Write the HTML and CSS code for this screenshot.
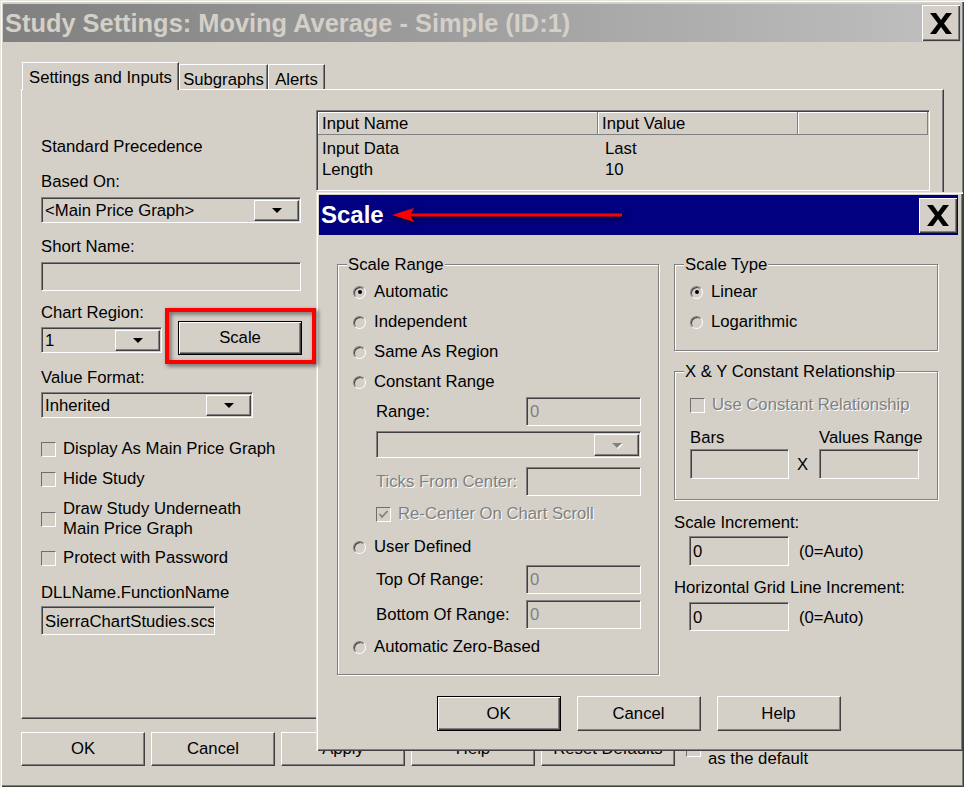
FILE: index.html
```html
<!DOCTYPE html>
<html>
<head>
<meta charset="utf-8">
<title>Study Settings</title>
<link rel="stylesheet" href="styles.css">
</head>
<body>
<div class="win">
  <div class="titlebar inactive">
    <span class="title">Study Settings: Moving Average - Simple (ID:1)</span>
    <span class="xbtn xbtn-main"><svg width="22" height="21" viewBox="0 0 22 21"><polygon points="0,0 6,0 11,7 16,0 22,0 14,10.5 22,21 16,21 11,14 6,21 0,21 8,10.5" fill="#000"/></svg></span>
  </div>
  <div class="win-body">
    <div class="tabs">
      <div class="tab active w157">Settings and Inputs</div>
      <div class="tab w89">Subgraphs</div>
      <div class="tab w57">Alerts</div>
    </div>
    <div class="panel">
      <div class="left-col">
        <div class="lbl">Standard Precedence</div>
        <div class="lbl mt15">Based On:</div>
        <div class="combo w260 mt6"><span class="combo-text">&lt;Main Price Graph&gt;</span><span class="ddbtn"><i class="tri"></i></span></div>
        <div class="lbl mt13">Short Name:</div>
        <div class="edit w260 mt6"></div>
        <div class="lbl mt11">Chart Region:</div>
        <div class="cr-row">
          <div class="combo w121 mt6"><span class="combo-text">1</span><span class="ddbtn"><i class="tri"></i></span></div>
          <div class="btn default scale-btn">Scale</div>
        </div>
        <div class="lbl mt12">Value Format:</div>
        <div class="combo w212 mt5"><span class="combo-text">Inherited</span><span class="ddbtn"><i class="tri"></i></span></div>
        <div class="chk mt20"><span class="cbox"></span><span>Display As Main Price Graph</span></div>
        <div class="chk mt10"><span class="cbox"></span><span>Hide Study</span></div>
        <div class="chk mt10"><span class="cbox"></span><span>Draw Study Underneath<br>Main Price Graph</span></div>
        <div class="chk mt9"><span class="cbox"></span><span>Protect with Password</span></div>
        <div class="lbl mt15">DLLName.FunctionName</div>
        <div class="edit w174 mt4">SierraChartStudies.scsf_SimpleMovAvg</div>
      </div>
      <div class="list">
        <div class="list-head">
          <div class="hcell c1">Input Name</div>
          <div class="hcell c2">Input Value</div>
          <div class="hcell c3"></div>
        </div>
        <div class="list-rows">
          <div class="lrow"><span class="c1">Input Data</span><span class="c2">Last</span></div>
          <div class="lrow"><span class="c1">Length</span><span class="c2">10</span></div>
        </div>
      </div>
    </div>
    <div class="bottom-buttons">
      <div class="btn">OK</div>
      <div class="btn">Cancel</div>
      <div class="btn">Apply</div>
      <div class="btn">Help</div>
      <div class="btn w134">Reset Defaults</div>
      <div class="chk save-default"><span class="cbox"></span><span>Use these settings<br>as the default</span></div>
    </div>
  </div>
</div>

<div class="dlg">
  <div class="titlebar active">
    <span class="title dlg-title">Scale</span>
    <span class="xbtn xbtn-dlg"><svg width="22" height="21" viewBox="0 0 22 21"><polygon points="0,0 6,0 11,7 16,0 22,0 14,10.5 22,21 16,21 11,14 6,21 0,21 8,10.5" fill="#000"/></svg></span>
  </div>
  <div class="dlg-body">
    <div class="dlg-cols">
      <div class="group g-range">
        <div class="gtitle"><span>Scale Range</span></div>
        <div class="opt mt2"><span class="radio on"></span>Automatic</div>
        <div class="opt"><span class="radio"></span>Independent</div>
        <div class="opt"><span class="radio"></span>Same As Region</div>
        <div class="opt"><span class="radio"></span>Constant Range</div>
        <div class="field"><span class="flabel">Range:</span><span class="edit w115 h29 dis-val">0</span></div>
        <div class="combo w265 h27 mt5 ind"><span class="combo-text"></span><span class="ddbtn"><i class="tri tri-dis"></i></span></div>
        <div class="field mt8"><span class="flabel dis-text">Ticks From Center:</span><span class="edit w115 h29"></span></div>
        <div class="opt ind mt2"><span class="cbox checked"><svg width="13" height="13" viewBox="0 0 13 13"><polyline points="2.5,6 5,9 10.5,3" fill="none" stroke="#808080" stroke-width="1.8"/></svg></span><span class="dis-text">Re-Center On Chart Scroll</span></div>
        <div class="opt mt3"><span class="radio"></span>User Defined</div>
        <div class="field mt3"><span class="flabel">Top Of Range:</span><span class="edit w115 h29 dis-val">0</span></div>
        <div class="field mt5"><span class="flabel">Bottom Of Range:</span><span class="edit w115 h29 dis-val">0</span></div>
        <div class="opt mt2"><span class="radio"></span>Automatic Zero-Based</div>
      </div>
      <div class="dlg-right">
        <div class="group g-type">
          <div class="gtitle"><span>Scale Type</span></div>
          <div class="opt mt2"><span class="radio on"></span>Linear</div>
          <div class="opt"><span class="radio"></span>Logarithmic</div>
        </div>
        <div class="group g-xy">
          <div class="gtitle"><span>X &amp; Y Constant Relationship</span></div>
          <div class="opt mt8"><span class="cbox"></span><span class="dis-text">Use Constant Relationship</span></div>
          <div class="xy-grid">
            <span class="lbl">Bars</span><span></span><span class="lbl nowrap">Values Range</span>
            <span class="edit h30"></span><span class="xmark">X</span><span class="edit h30"></span>
          </div>
        </div>
        <div class="lbl mt12">Scale Increment:</div>
        <div class="inc-row mt4"><span class="edit w100 h30">0</span><span class="auto">(0=Auto)</span></div>
        <div class="lbl mt11">Horizontal Grid Line Increment:</div>
        <div class="inc-row mt5"><span class="edit w100 h29">0</span><span class="auto">(0=Auto)</span></div>
      </div>
    </div>
    <div class="dlg-buttons">
      <div class="btn default h35">OK</div>
      <div class="btn h35">Cancel</div>
      <div class="btn h35">Help</div>
    </div>
  </div>
</div>

<div class="red-box"></div>
<svg class="red-arrow" width="240" height="24" viewBox="0 0 240 24">
  <line x1="18" y1="12" x2="232" y2="12" stroke="#f00" stroke-width="3"/>
  <polygon points="2,12 24,5 20,12 24,19" fill="#f00"/>
</svg>
</body>
</html>
```

FILE: styles.css
```css
* { box-sizing: border-box; }
html, body { margin: 0; padding: 0; }
body {
  width: 964px;
  height: 787px;
  overflow: hidden;
  position: relative;
  background: #d4d0c8;
  font-family: "Liberation Sans", Arial, sans-serif;
  font-size: 16.7px;
  line-height: 20px;
  color: #000;
}

/* ---------- outer window ---------- */
.win {
  width: 964px;
  height: 787px;
  padding: 4px 3px 3px 3px;
  background: #d4d0c8;
  box-shadow: inset 1px 1px #e6e4df, inset 2px 2px #fff, inset -1px -1px #404040, inset -2px -2px #808080;
}
.titlebar {
  display: flex;
  align-items: center;
  justify-content: space-between;
  height: 38px;
  padding: 0 1px 0 2px;
}
.titlebar.inactive { background: linear-gradient(to right, #808080, #c0c0c0); }
.title {
  font-weight: bold;
  font-size: 25.4px;
  line-height: 30px;
  color: #d4d0c8;
  white-space: nowrap;
}
.xbtn {
  width: 38px;
  height: 36px;
  display: flex;
  align-items: center;
  justify-content: center;
  background: #d4d0c8;
  box-shadow: inset 1px 1px #fff, inset -1px -1px #404040, inset -2px -2px #808080;
}
.win-body { padding: 20px 0 0 18px; }

.tabs {
  display: flex;
  align-items: flex-end;
  height: 27px;
  margin-left: 1px;
  position: relative;
  z-index: 1;
}
.tab {
  height: 25px;
  padding-top: 5px;
  text-align: center;
  white-space: nowrap;
  background: #d4d0c8;
  border-top: 1px solid #fff;
  border-left: 1px solid #fff;
  border-right: 1px solid #404040;
  box-shadow: inset -1px 0 #808080;
}
.tab.active {
  height: 28px;
  margin-bottom: -1px;
  padding-top: 5px;
}
.w157 { width: 157px; }
.w89 { width: 89px; }
.w57 { width: 57px; }

.panel {
  width: 923px;
  height: 630px;
  display: flex;
  align-items: flex-start;
  padding: 20px 12px 0 19px;
  border: 1px solid;
  border-color: #fff #404040 #404040 #fff;
  box-shadow: inset -1px -1px #808080;
}
.left-col {
  width: 275px;
  flex: none;
  padding-top: 26px;
}
.lbl { height: 20px; line-height: 22px; white-space: nowrap; }
.nowrap { white-space: nowrap; }

.mt2 { margin-top: 2px; }
.mt3 { margin-top: 3px; }
.mt4 { margin-top: 4px; }
.mt5 { margin-top: 5px; }
.mt6 { margin-top: 6px; }
.mt8 { margin-top: 8px; }
.mt9 { margin-top: 9px; }
.mt10 { margin-top: 10px; }
.mt11 { margin-top: 11px; }
.mt12 { margin-top: 12px; }
.mt13 { margin-top: 13px; }
.mt15 { margin-top: 15px; }
.mt20 { margin-top: 20px; }

/* combos & edits */
.combo {
  height: 26px;
  display: flex;
  align-items: stretch;
  padding: 2px 1px 1px 2px;
  border: 1px solid;
  border-color: #808080 #fff #fff #808080;
  box-shadow: inset 1px 1px #404040;
}
.combo-text {
  flex: 1;
  padding-left: 1px;
  display: flex;
  align-items: center;
  white-space: nowrap;
  overflow: hidden;
}
.ddbtn {
  width: 45px;
  flex: none;
  display: flex;
  align-items: center;
  justify-content: center;
  border: 1px solid;
  border-color: #fff #404040 #404040 #fff;
  box-shadow: inset -1px -1px #808080;
}
.tri {
  width: 0;
  height: 0;
  border-left: 5px solid transparent;
  border-right: 5px solid transparent;
  border-top: 5px solid #000;
}
.tri-dis {
  border-top-color: #808080;
  filter: drop-shadow(1px 1px 0 #fff);
}
.edit {
  height: 29px;
  display: flex;
  align-items: center;
  padding: 2px 3px 0 3px;
  white-space: nowrap;
  overflow: hidden;
  border: 1px solid;
  border-color: #808080 #fff #fff #808080;
  box-shadow: inset 1px 1px #404040;
}
.w100 { width: 100px; }
.w115 { width: 115px; }
.w121 { width: 121px; }
.w134 { width: 134px; }
.w174 { width: 174px; }
.w212 { width: 212px; }
.w260 { width: 260px; }
.w265 { width: 265px; }
.h27 { height: 27px; }
.h29 { height: 29px; }
.h30 { height: 30px; }
.h35 { height: 35px; }

.cr-row {
  display: flex;
  align-items: flex-start;
  margin-top: -1px;
}
.scale-btn {
  width: 123px;
  margin-left: 16px;
}

/* buttons */
.btn {
  width: 124px;
  height: 34px;
  flex: none;
  display: flex;
  align-items: center;
  justify-content: center;
  background: #d4d0c8;
  white-space: nowrap;
  border: 1px solid;
  border-color: #fff #404040 #404040 #fff;
  box-shadow: inset -1px -1px #808080;
}
.btn.default {
  border-color: #000;
  box-shadow: inset 1px 1px #fff, inset -1px -1px #404040, inset -2px -2px #808080;
}
.btn.w134 { width: 134px; }
.btn.h35 { height: 35px; }

/* checkboxes & radios */
.chk {
  display: flex;
  align-items: center;
  gap: 7px;
  line-height: 20px;
  white-space: nowrap;
  padding-top: 1px;
  margin-bottom: -1px;
}
.cbox {
  width: 15px;
  height: 15px;
  flex: none;
  display: flex;
  align-items: center;
  justify-content: center;
  border: 1px solid;
  border-color: #6e6e6e #fff #fff #6e6e6e;
}
.radio {
  width: 13px;
  height: 13px;
  flex: none;
  margin-right: 8px;
  border-radius: 50%;
  display: flex;
  align-items: center;
  justify-content: center;
  border: 1px solid;
  border-color: #808080 #fff #fff #808080;
  box-shadow: inset 1px 1px #404040;
}
.radio.on::after {
  content: "";
  width: 4px;
  height: 4px;
  border-radius: 50%;
  background: #000;
}

/* list */
.list {
  width: 614px;
  height: 81px;
  flex: none;
  border: 1px solid;
  border-color: #808080 #fff #fff #808080;
  box-shadow: inset 1px 1px #404040;
  padding: 1px 1px 0 1px;
  overflow: hidden;
}
.list-head {
  display: flex;
  height: 23px;
  border-bottom: 1px solid #808080;
}
.hcell {
  height: 22px;
  line-height: 24px;
  padding-left: 4px;
  border-right: 1px solid #808080;
  box-shadow: inset 1px 1px #fff;
  white-space: nowrap;
}
.hcell.c1 { width: 280px; }
.hcell.c2 { width: 200px; }
.hcell.c3 { width: 130px; }
.list-rows { padding-top: 3px; }
.lrow {
  display: flex;
  height: 21px;
  line-height: 21px;
}
.lrow .c1 { width: 281px; padding-left: 4px; }
.lrow .c2 { padding-left: 6px; }

.bottom-buttons {
  display: flex;
  align-items: flex-start;
  gap: 6px;
  margin-top: 13px;
}
.save-default {
  height: 34px;
  margin-left: 5px;
  padding-top: 0;
  margin-bottom: 0;
}

/* ---------- Scale dialog ---------- */
.dlg {
  position: absolute;
  left: 316px;
  top: 192px;
  width: 647px;
  height: 559px;
  padding: 3px 5px 4px 3px;
  background: #d4d0c8;
  box-shadow: inset 1px 1px #e6e4df, inset 2px 2px #fff, inset -1px -1px #404040, inset -2px -2px #808080;
}
.titlebar.active {
  height: 40px;
  background: #000080;
  padding: 0 1px 0 2px;
}
.dlg-title {
  font-size: 24px;
  color: #fff;
}
.xbtn-dlg { height: 35px; }
.dlg-body { padding-top: 29px; }
.dlg-cols {
  display: flex;
  align-items: flex-start;
  gap: 15px;
  padding-left: 18px;
}
.group {
  border: 1px solid #808080;
  box-shadow: inset 1px 1px #fff, 1px 1px #fff;
}
.gtitle {
  height: 20px;
  line-height: 22px;
  margin-top: -11px;
  padding-left: 9px;
  white-space: nowrap;
}
.gtitle span {
  background: #d4d0c8;
  padding: 0 1px;
}
.g-range {
  width: 322px;
  padding-bottom: 13px;
}
.dlg-right { width: 264px; flex: none; }
.g-type { padding-bottom: 14px; }
.g-xy { margin-top: 20px; padding-bottom: 20px; }
.opt {
  height: 30px;
  display: flex;
  align-items: center;
  padding-left: 15px;
  padding-top: 2px;
  white-space: nowrap;
}
.opt .cbox { margin-right: 7px; }
.opt.ind { padding-left: 38px; }
.combo.ind { margin-left: 38px; }
.field {
  height: 30px;
  display: flex;
  align-items: center;
  padding-left: 38px;
  white-space: nowrap;
}
.field .flabel { padding-top: 2px; }
.flabel { width: 150px; flex: none; }
.dis-text { color: #808080; text-shadow: 1px 1px 0 #fff; }
.dis-val { color: #808080; }

.xy-grid {
  display: grid;
  grid-template-columns: 99px 30px 100px;
  grid-template-rows: 20px 30px;
  row-gap: 2px;
  margin: 8px 0 0 15px;
}
.xmark {
  display: flex;
  align-items: center;
  justify-content: center;
  padding: 2px 3px 0 0;
}
.inc-row {
  display: flex;
  align-items: center;
  margin-left: 15px;
}
.auto { margin-left: 10px; padding-top: 2px; }

.dlg-buttons {
  display: flex;
  justify-content: center;
  gap: 16px;
  margin-top: 21px;
}

/* ---------- annotations ---------- */
.red-box {
  position: absolute;
  left: 165px;
  top: 308px;
  width: 151px;
  height: 56px;
  border: 4px solid #f00;
  filter: drop-shadow(2px 2px 2px rgba(0,0,0,0.55));
}
.red-arrow {
  position: absolute;
  left: 390px;
  top: 203px;
  filter: drop-shadow(2px 2px 2px rgba(0,0,0,0.6));
}
```
